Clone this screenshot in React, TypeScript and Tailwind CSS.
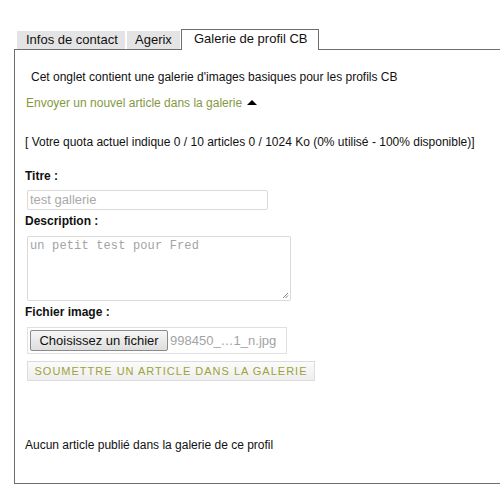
import React from 'react';

const font = "font-['Liberation_Sans',Arial,sans-serif]";

function Tabs() {
  return (
    <div className="flex items-end h-[20px] pl-[3px] relative z-10">
      <div className="h-[18px] w-[108px] bg-[#e4e4e4] text-[13px] leading-[18px] text-[#111] pl-[9px]">Infos de contact</div>
      <div className="h-[18px] w-[53px] ml-[2px] bg-[#e4e4e4] text-[13px] leading-[18px] text-[#111] pl-[8px]">Agerix</div>
      <div className="h-[21px] w-[138px] ml-[1px] -mb-[1px] bg-white border border-b-0 border-[#6e6e6e] text-[13px] leading-[18px] text-[#111] pl-[12px]">
        Galerie de profil CB
      </div>
    </div>
  );
}

export default function App() {
  return (
    <div className={`w-[500px] h-[492px] bg-white overflow-hidden pt-[29px] pl-[14px] ${font}`}>
      <Tabs />
      <div className="w-[540px] h-[435px] border border-[#6e6e6e] pl-[10px] text-[12px] leading-[14px] text-[#111]">
        <p className="mt-[20px] ml-[6px]">Cet onglet contient une galerie d'images basiques pour les profils CB</p>
        <p className="mt-[12px] ml-[1px] flex items-center text-[#84993f]">
          Envoyer un nouvel article dans la galerie
          <span className="ml-[5px] mb-[1px] w-0 h-0 border-l-[5px] border-r-[5px] border-b-[5px] border-l-transparent border-r-transparent border-b-black" />
        </p>
        <p className="mt-[25px]">[ Votre quota actuel indique 0 / 10 articles 0 / 1024 Ko (0% utilisé - 100% disponible)]</p>

        <label className="block mt-[20px] font-bold">Titre :</label>
        <div className="mt-[7px] ml-[2px] w-[241px] h-[20px] border border-[#dadada] rounded-[2px] text-[13px] leading-[18px] text-[#a9a9a9] pl-[2px]">
          test gallerie
        </div>

        <label className="block mt-[4px] font-bold">Description :</label>
        <div className="relative mt-[8px] ml-[2px] w-[264px] h-[65px] border border-[#dadada] rounded-[2px] font-['Liberation_Mono','Courier_New',monospace] text-[12px] leading-[16px] tracking-[0.15px] text-[#a3a3a3] pl-[2px] pt-[1px]">
          un petit test pour Fred
          <svg className="absolute right-[1px] bottom-[1px]" width="7" height="7" viewBox="0 0 7 7">
            <path d="M6 1 L1 6 M6 3.5 L3.5 6" stroke="#888" strokeWidth="1" />
          </svg>
        </div>

        <label className="block mt-[4px] font-bold">Fichier image :</label>
        <div className="mt-[8px] ml-[2px] w-[260px] h-[27px] border border-[#e0e0e0] flex items-center pl-[2px]">
          <div className="h-[21px] w-[138px] border border-[#8a8a8a] rounded-[2px] bg-gradient-to-b from-[#f6f6f6] to-[#dedede] text-[13px] leading-[19px] text-[#111] text-center">
            Choisissez un fichier
          </div>
          <span className="ml-[2px] text-[13px] text-[#a3a3a3]">998450_…1_n.jpg</span>
        </div>

        <div className="mt-[7px] ml-[2px] w-[288px] h-[20px] border border-[#dcdcdc] bg-gradient-to-b from-[#fbfbfb] to-[#eeeeee] text-[11px] leading-[18px] tracking-[1px] text-[#9ea336] text-center">
          SOUMETTRE UN ARTICLE DANS LA GALERIE
        </div>

        <p className="mt-[57px]">Aucun article publié dans la galerie de ce profil</p>
      </div>
    </div>
  );
}
